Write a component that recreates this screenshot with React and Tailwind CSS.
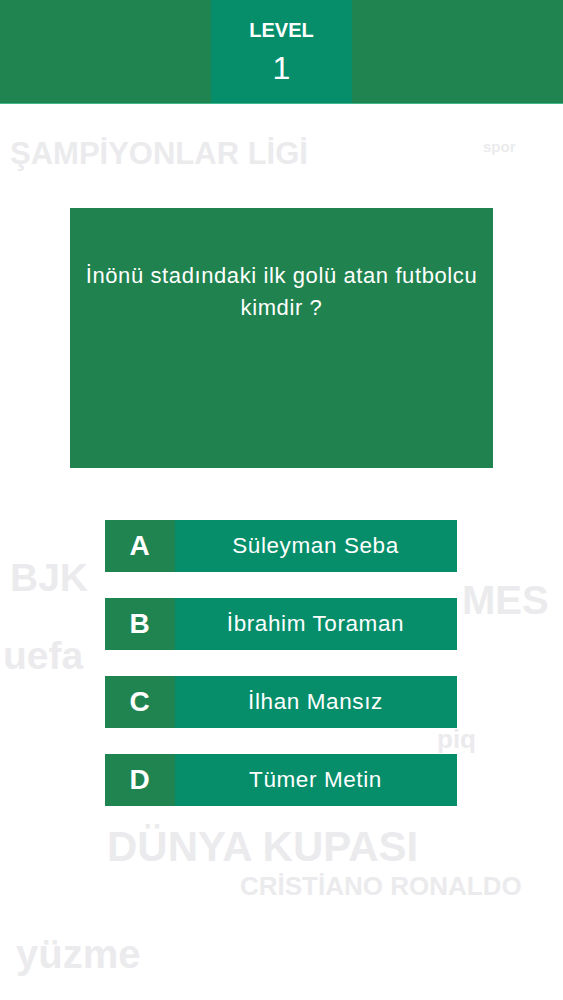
import React from 'react';

const answers = [
  { key: 'A', text: 'Süleyman Seba' },
  { key: 'B', text: 'İbrahim Toraman' },
  { key: 'C', text: 'İlhan Mansız' },
  { key: 'D', text: 'Tümer Metin' },
];

// decorative words scattered behind the quiz
const bgWords = [
  { text: 'ŞAMPİYONLAR LİGİ', cls: 'left-[10px] top-[138px] text-[31px]' },
  { text: 'spor', cls: 'left-[483px] top-[139px] text-[15px]' },
  { text: 'BJK', cls: 'left-[10px] top-[558px] text-[39px]' },
  { text: 'uefa', cls: 'left-[3px] top-[636px] text-[39px]' },
  { text: 'MES', cls: 'left-[462px] top-[580px] text-[40px]' },
  { text: 'piq', cls: 'left-[437px] top-[726px] text-[26px]' },
  { text: 'DÜNYA KUPASI', cls: 'left-[107px] top-[826px] text-[42px]' },
  { text: 'CRİSTİANO RONALDO', cls: 'left-[240px] top-[873px] text-[26px] font-semibold' },
  { text: 'yüzme', cls: 'left-[16px] top-[934px] text-[40px]' },
];

const App = () => {
  return (
    <div
      className="relative w-full h-[1000px] overflow-hidden bg-white"
      style={{ fontFamily: '"Liberation Sans", Arial, sans-serif' }}
    >
      {bgWords.map((w) => (
        <span
          key={w.text}
          className={`absolute font-bold text-[#ebebed] whitespace-nowrap leading-none ${w.cls}`}
        >
          {w.text}
        </span>
      ))}

      <div className="relative z-10 flex justify-center h-[104px] bg-[#1f8450] border-b border-[#3fb98c]">
        <div className="w-[141px] bg-[#068e6b] flex flex-col items-center pt-[19px] text-white">
          <span className="text-[20px] font-bold leading-[22px]">LEVEL</span>
          <span className="text-[32px] leading-[36px] mt-[9px]">1</span>
        </div>
      </div>

      <div className="relative z-10 flex flex-col items-center">
        <div className="mt-[104px] w-[423px] h-[260px] bg-[#20834f] px-[6px] pt-[52px] text-center text-white text-[22px] tracking-[0.6px] leading-[32px]">
          İnönü stadındaki ilk golü atan futbolcu kimdir ?
        </div>

        <div className="mt-[52px] -ml-[2px] flex flex-col gap-[26px]">
          {answers.map((a) => (
            <div key={a.key} className="flex w-[352px] h-[52px]">
              <div className="w-[70px] bg-[#1f8450] flex items-center justify-center text-white text-[28px] font-bold">
                {a.key}
              </div>
              <div className="flex-1 bg-[#068e6b] flex items-center justify-center text-white text-[22.5px] tracking-[0.6px]">
                {a.text}
              </div>
            </div>
          ))}
        </div>
      </div>
    </div>
  );
};

export default App;
